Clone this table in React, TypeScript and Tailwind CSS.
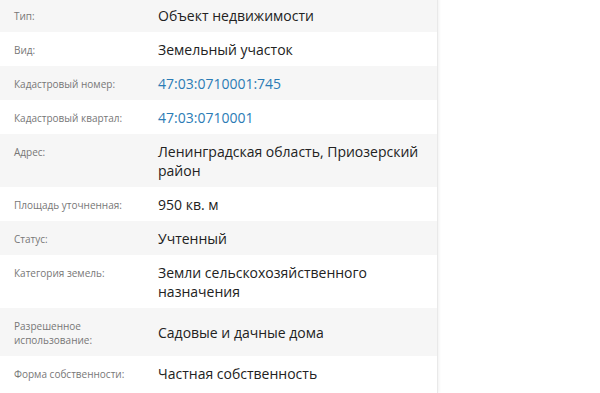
import React from 'react'

type Row = {
  label: string
  value: string
  link?: boolean
}

const rows: Row[] = [
  { label: 'Тип:', value: 'Объект недвижимости' },
  { label: 'Вид:', value: 'Земельный участок' },
  { label: 'Кадастровый номер:', value: '47:03:0710001:745', link: true },
  { label: 'Кадастровый квартал:', value: '47:03:0710001', link: true },
  { label: 'Адрес:', value: 'Ленинградская область, Приозерский район' },
  { label: 'Площадь уточненная:', value: '950 кв. м' },
  { label: 'Статус:', value: 'Учтенный' },
  { label: 'Категория земель:', value: 'Земли сельскохозяйственного назначения' },
  { label: 'Разрешенное использование:', value: 'Садовые и дачные дома' },
  { label: 'Форма собственности:', value: 'Частная собственность' },
]

const App: React.FC = () => {
  return (
    <div className="w-[600px] h-[393px] overflow-hidden bg-white font-['Open_Sans','Liberation_Sans',sans-serif]">
      {/* Панель с характеристиками */}
      <div className="w-[438px] h-[395px] border-r border-[#e9e9e9] shadow-[1px_0_3px_rgba(0,0,0,0.06)] -mt-[2px]">
        {rows.map((row, i) => (
          <div
            key={row.label}
            className={`flex ${i % 2 === 0 ? 'bg-[#f6f6f6]' : 'bg-white'}`}
          >
            <div className="w-[158px] shrink-0 self-start pl-[14px] pr-[28px] pt-[11px] pb-[9px] text-[10px] leading-[14px] text-[#777]">
              {row.label}
            </div>
            <div
              className={`flex-1 self-center pr-[12px] py-[7.5px] text-[14px] leading-[19px] ${
                row.link ? 'text-[#2b7bb5]' : 'text-[#222]'
              }`}
            >
              {row.value}
            </div>
          </div>
        ))}
      </div>
    </div>
  )
}

export default App
